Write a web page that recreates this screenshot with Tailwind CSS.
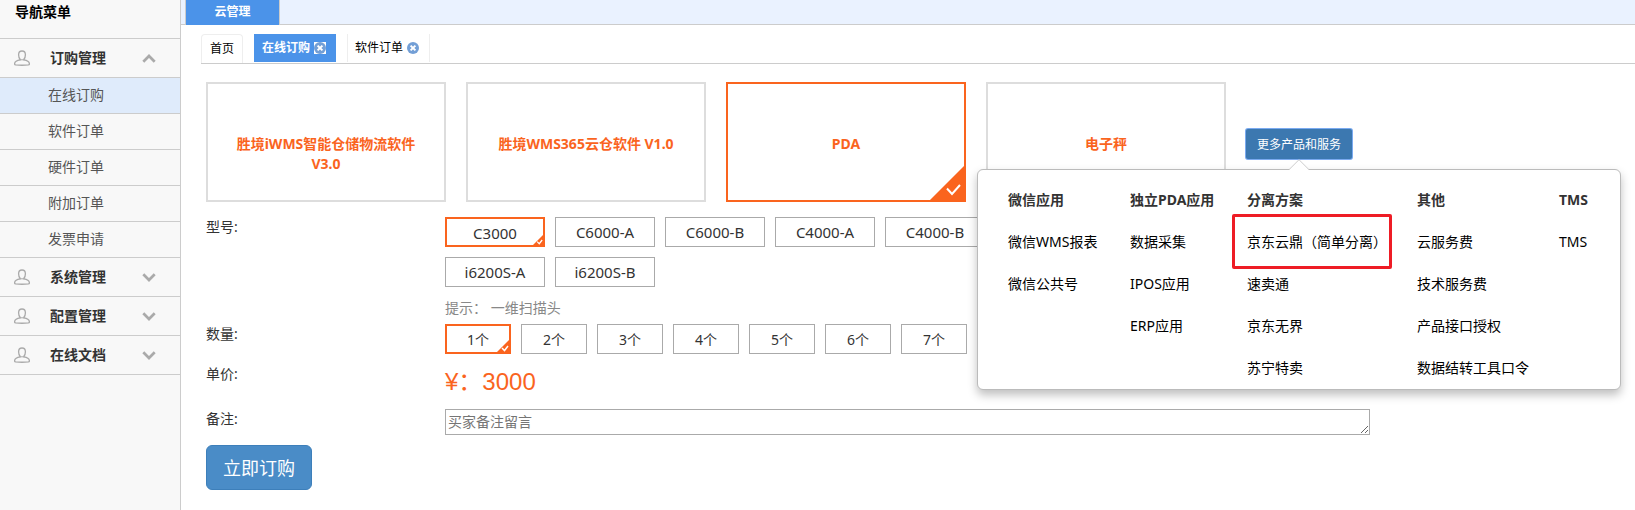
<!DOCTYPE html>
<html lang="zh-CN">

<head>
  <meta charset="UTF-8" />
  <meta name="viewport" content="width=device-width, initial-scale=1.0" />
  <title>在线订购</title>
  <script src="https://cdn.jsdelivr.net/npm/@tailwindcss/browser@4"></script>
</head>
<body class="bg-white text-sm leading-5 text-[#333] font-['Noto_Sans','Noto_Sans_CJK_SC',sans-serif]">

<!-- Shared icons -->
<svg class="hidden">
  <symbol id="icon-user" viewBox="0 0 16 16">
    <path d="M8 1C5.700 1 4.600 2.600 4.600 4.800c0 2 .6 3.500 1.500 4.500v.6C3.200 10.300.8 11.600.6 13.700c-.1.800.3 1.100 1 1.200 3.500.4 9.300.4 12.800 0 .7-.1 1.100-.4 1-1.200-.2-2.100-2.600-3.400-5.500-3.800v-.6c.9-1 1.500-2.500 1.500-4.500C11.400 2.600 10.300 1 8 1z" fill="none" stroke="#aaa" stroke-width="1.300" />
    <path d="M5.500 9.800h5" stroke="#aaa" />
  </symbol>
  <symbol id="icon-chevron" viewBox="0 0 14 9">
    <path d="M1.300 1.300 7 7l5.700-5.700" fill="none" stroke="#aaa" stroke-width="2.700" />
  </symbol>
  <symbol id="icon-close" viewBox="0 0 12 12">
    <circle cx="6" cy="6" r="6" fill="#739fd6" />
    <path d="M3.600 3.600l4.800 4.800M8.400 3.600l-4.800 4.800" stroke="#fff" stroke-width="2" />
  </symbol>
  <symbol id="icon-corner" viewBox="0 0 34 34">
    <path d="M34 0v34H0z" fill="#fa641e" />
    <path d="M17 22.500l5 5.500 8-9" fill="none" stroke="#fff" stroke-width="2" />
  </symbol>
  <symbol id="icon-corner-sm" viewBox="0 0 12 12">
    <path d="M12 0v12H0z" fill="#fa641e" />
    <path d="M5 8l2.500 2.500L11 6" fill="none" stroke="#fff" stroke-width="1.500" />
  </symbol>
</svg>

<div class="flex min-h-screen">

  <!-- Sidebar -->
  <aside class="w-[181px] shrink-0 bg-[#f8f8f8] border-r border-[#ccc]">
    <h1 class="h-[39px] pt-0.5 pl-[15px] border-b border-[#ccc] font-bold text-black">导航菜单</h1>
    <nav>
      <button class="flex items-center w-full h-[39px] pl-3.5 border-b border-[#ccc] font-bold">
        <svg class="w-4 h-4"><use href="#icon-user" /></svg>
        <span class="ml-5 w-[92px] text-left">订购管理</span>
        <svg class="w-3.5 h-[9px] rotate-180"><use href="#icon-chevron" /></svg>
      </button>
      <ul class="text-[#555]">
        <li><a href="#" class="block h-9 pl-12 leading-[33px] border-b border-[#ccc] bg-[#dfebfb]">在线订购</a></li>
        <li><a href="#" class="block h-9 pl-12 leading-[33px] border-b border-[#ccc]">软件订单</a></li>
        <li><a href="#" class="block h-9 pl-12 leading-[33px] border-b border-[#ccc]">硬件订单</a></li>
        <li><a href="#" class="block h-9 pl-12 leading-[33px] border-b border-[#ccc]">附加订单</a></li>
        <li><a href="#" class="block h-9 pl-12 leading-[33px] border-b border-[#ccc]">发票申请</a></li>
      </ul>
      <button class="flex items-center w-full h-[39px] pl-3.5 border-b border-[#ccc] font-bold">
        <svg class="w-4 h-4"><use href="#icon-user" /></svg>
        <span class="ml-5 w-[92px] text-left">系统管理</span>
        <svg class="w-3.5 h-[9px]"><use href="#icon-chevron" /></svg>
      </button>
      <button class="flex items-center w-full h-[39px] pl-3.5 border-b border-[#ccc] font-bold">
        <svg class="w-4 h-4"><use href="#icon-user" /></svg>
        <span class="ml-5 w-[92px] text-left">配置管理</span>
        <svg class="w-3.5 h-[9px]"><use href="#icon-chevron" /></svg>
      </button>
      <button class="flex items-center w-full h-[39px] pl-3.5 border-b border-[#ccc] font-bold">
        <svg class="w-4 h-4"><use href="#icon-user" /></svg>
        <span class="ml-5 w-[92px] text-left">在线文档</span>
        <svg class="w-3.5 h-[9px]"><use href="#icon-chevron" /></svg>
      </button>
    </nav>
  </aside>

  <main class="flex-1 min-w-0">
    <!-- Module bar -->
    <div class="flex h-[25px] pl-1 bg-[#eaf2ff] border-b border-[#ccc] text-xs">
      <a href="#" class="w-[95px] h-[25px] leading-6 bg-[#4b93e9] border-x border-[#ccc] text-center font-bold text-white">云管理</a>
    </div>

    <!-- Page tabs -->
    <div class="flex ml-5 mt-[9px] h-[30px] border-b border-[#ccc] text-xs text-black">
      <a href="#" class="w-[42px] mr-[11px] leading-7 border border-b-0 border-[#eee] rounded-t text-center">首页</a>
      <a href="#" class="flex items-center w-[82px] h-7 mr-[11px] pl-2 gap-1 bg-[#4b93e9] font-bold text-white">在线订购
        <svg class="w-3 h-3 bg-white"><use href="#icon-close" /></svg>
      </a>
      <a href="#" class="flex items-center w-[83px] h-7 pl-[7px] gap-1 border-x border-[#eee]">软件订单
        <svg class="w-3 h-3"><use href="#icon-close" /></svg>
      </a>
    </div>

    <form class="pl-[25px] pt-[18px]">
      <!-- Products -->
      <div class="flex items-start gap-5">
        <button type="button" class="w-60 h-[120px] px-6 pt-[50px] flex flex-col items-center border-2 border-[#ddd] font-bold text-[#fa641e]">胜境iWMS智能仓储物流软件 V3.0</button>
        <button type="button" class="w-60 h-[120px] pt-[50px] flex flex-col items-center border-2 border-[#ddd] font-bold text-[#fa641e]">胜境WMS365云仓软件 V1.0</button>
        <button type="button" class="relative w-60 h-[120px] pt-[50px] flex flex-col items-center border-2 border-[#fa641e] font-bold text-[#fa641e]">PDA
          <svg class="absolute right-0 bottom-0 w-[34px] h-[34px]"><use href="#icon-corner" /></svg>
        </button>
        <button type="button" class="w-60 h-[120px] pt-[50px] flex flex-col items-center border-2 border-[#ddd] font-bold text-[#fa641e]">电子秤</button>

        <div class="relative mt-[47px]">
          <button type="button" class="block w-[106px] h-[30px] pt-px rounded-xs bg-[#3c78b0] ring-1 ring-[#7aaaf0] text-xs text-white">更多产品和服务</button>

          <!-- More products popover -->
          <div class="absolute z-10 top-10 -left-[269px] w-[644px] pt-[9px] pl-[30px] bg-white border border-[#bbb] rounded-md shadow-[0_5px_10px_rgba(0,0,0,0.25)] text-black">
            <svg class="absolute -top-[11px] left-[311px] w-5 h-3" viewBox="0 0 20 12">
              <path d="M0 11 10 .7 20 11v1H0z" fill="#fff" />
              <path d="M0 10.700 10 .7l10 10" fill="none" stroke="#ccc" />
            </svg>
            <table class="w-full table-fixed text-left whitespace-nowrap">
              <colgroup>
                <col class="w-[122px]" />
                <col class="w-[117px]" />
                <col class="w-[170px]" />
                <col class="w-[142px]" />
                <col />
              </colgroup>
              <thead class="text-[#333]">
                <tr class="h-[42px]"><th>微信应用</th><th>独立PDA应用</th><th>分离方案</th><th>其他</th><th>TMS</th></tr>
              </thead>
              <tbody>
                <tr class="h-[42px]">
                  <td><a href="#">微信WMS报表</a></td>
                  <td><a href="#">数据采集</a></td>
                  <td class="relative">
                    <a href="#">京东云鼎（简单分离）</a>
                    <span class="absolute -top-[7px] -left-[15px] w-40 h-[55px] border-3 border-[#ee1c25] rounded-xs"></span>
                  </td>
                  <td><a href="#">云服务费</a></td>
                  <td><a href="#">TMS</a></td>
                </tr>
                <tr class="h-[42px]">
                  <td><a href="#">微信公共号</a></td>
                  <td><a href="#">IPOS应用</a></td>
                  <td><a href="#">速卖通</a></td>
                  <td><a href="#">技术服务费</a></td>
                  <td></td>
                </tr>
                <tr class="h-[42px]">
                  <td></td>
                  <td><a href="#">ERP应用</a></td>
                  <td><a href="#">京东无界</a></td>
                  <td><a href="#">产品接口授权</a></td>
                  <td></td>
                </tr>
                <tr class="h-[42px]">
                  <td></td>
                  <td></td>
                  <td><a href="#">苏宁特卖</a></td>
                  <td><a href="#">数据结转工具口令</a></td>
                  <td></td>
                </tr>
              </tbody>
            </table>
          </div>
        </div>
      </div>

      <!-- Model -->
      <div class="flex mt-[15px]">
        <div class="w-[239px] shrink-0">型号:</div>
        <div>
          <div class="flex flex-wrap gap-2.5 max-w-[600px] text-[15px] leading-5">
            <button type="button" class="relative w-[100px] h-[30px] pt-0.5 border-2 border-[#fa641e]">C3000
              <svg class="absolute right-0 bottom-0 w-2.5 h-2.5"><use href="#icon-corner-sm" /></svg>
            </button>
            <button type="button" class="w-[100px] h-[30px] border border-[#aaa]">C6000-A</button>
            <button type="button" class="w-[100px] h-[30px] border border-[#aaa]">C6000-B</button>
            <button type="button" class="w-[100px] h-[30px] border border-[#aaa]">C4000-A</button>
            <button type="button" class="w-[100px] h-[30px] border border-[#aaa]">C4000-B</button>
            <button type="button" class="w-[100px] h-[30px] border border-[#aaa]">i6200S-A</button>
            <button type="button" class="w-[100px] h-[30px] border border-[#aaa]">i6200S-B</button>
          </div>
          <p class="mt-[11px] text-[#888]">提示： 一维扫描头</p>
        </div>
      </div>

      <!-- Quantity -->
      <div class="flex mt-1.5">
        <div class="w-[239px] shrink-0">数量:</div>
        <div class="flex gap-2.5">
          <button type="button" class="relative w-[66px] h-[30px] pt-0.5 border-2 border-[#fa641e]">1个
            <svg class="absolute right-0 bottom-0 w-3 h-3"><use href="#icon-corner-sm" /></svg>
          </button>
          <button type="button" class="w-[66px] h-[30px] pt-0.5 border border-[#aaa]">2个</button>
          <button type="button" class="w-[66px] h-[30px] pt-0.5 border border-[#aaa]">3个</button>
          <button type="button" class="w-[66px] h-[30px] pt-0.5 border border-[#aaa]">4个</button>
          <button type="button" class="w-[66px] h-[30px] pt-0.5 border border-[#aaa]">5个</button>
          <button type="button" class="w-[66px] h-[30px] pt-0.5 border border-[#aaa]">6个</button>
          <button type="button" class="w-[66px] h-[30px] pt-0.5 border border-[#aaa]">7个</button>
          <button type="button" class="w-[66px] h-[30px] pt-0.5 border border-[#aaa]">8个</button>
        </div>
      </div>

      <!-- Price -->
      <div class="flex mt-2.5">
        <div class="w-[239px] shrink-0">单价:</div>
        <div class="text-2xl leading-9 text-[#fa641e] font-['Liberation_Sans','Noto_Sans_CJK_SC',sans-serif]">¥：3000</div>
      </div>

      <!-- Remark -->
      <div class="flex mt-[9px] pr-5">
        <label for="remark" class="w-[239px] shrink-0">备注:</label>
        <textarea id="remark" rows="1" placeholder="买家备注留言" class="block w-full max-w-[925px] h-[26px] p-0.5 border border-[#aaa] placeholder:text-[#757575]"></textarea>
      </div>

      <button type="submit" class="mt-2.5 w-[106px] h-[45px] rounded-md bg-[#4a8cc7] border border-[#3d7fba] text-lg text-white">立即订购</button>
    </form>
  </main>
</div>

</body>

</html>
